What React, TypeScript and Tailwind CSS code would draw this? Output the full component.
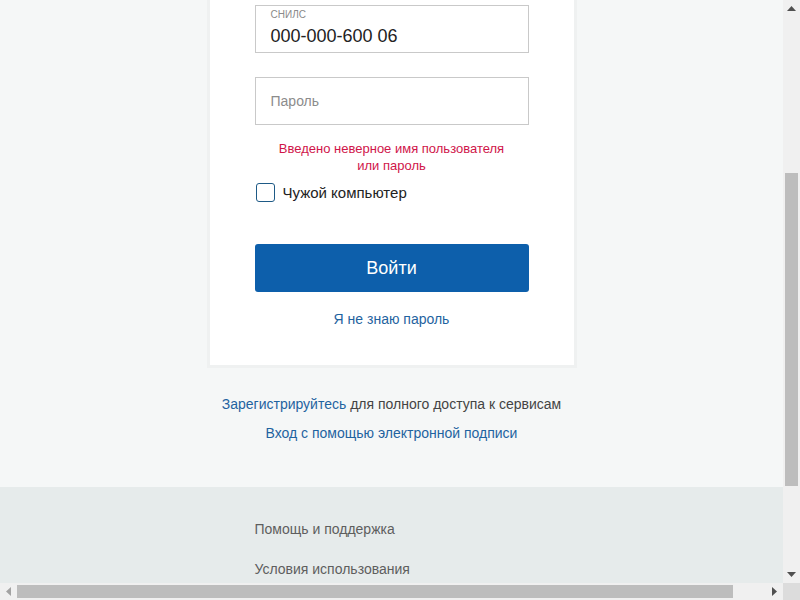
export default function App() {
  const font = { fontFamily: '"Liberation Sans", Arial, sans-serif' };
  return (
    <div className="w-[800px] h-[600px] overflow-hidden flex flex-col bg-[#f0f0f0]" style={font}>
      <div className="flex h-[583px]">
        {/* page viewport */}
        <div className="w-[783px] h-[583px] overflow-hidden flex flex-col bg-[#f5f7f7]">
          <div className="w-[370px] mx-auto bg-white border-x-[3px] border-b-[3px] border-[#eff1f1] px-[45px] pt-[5px] pb-[36px]">
            <div className="h-[48px] border border-[#c9c9c9] px-[15px] flex flex-col">
              <span className="text-[10px] leading-[10px] text-[#8a8a8a] mt-[4px]">СНИЛС</span>
              <span className="text-[18px] leading-[20px] text-[#222] mt-[6px]">000-000-600 06</span>
            </div>
            <div className="h-[48px] mt-[24px] border border-[#c9c9c9] px-[15px] flex items-center">
              <span className="text-[14px] text-[#8c8c8c]">Пароль</span>
            </div>
            <p className="mt-[15px] text-center text-[13px] leading-[17px] text-[#d0154a]">
              Введено неверное имя пользователя
              <br />
              или пароль
            </p>
            <label className="mt-[9px] flex items-center gap-[8px]">
              <span className="w-[19px] h-[19px] rounded-[3px] border-[1.5px] border-[#1e5a86] ml-[1px]" />
              <span className="text-[15px] leading-[19px] text-[#222]">Чужой компьютер</span>
            </label>
            <button className="mt-[42px] w-full h-[48px] rounded-[3px] bg-[#0d5fab] text-white text-[18px] flex items-center justify-center">
              Войти
            </button>
            <div className="mt-[17px] text-center text-[14px] leading-[20px] text-[#1f63a0]">Я не знаю пароль</div>
          </div>
          <div className="mt-[26px] text-center text-[14px] leading-[20px] text-[#444]">
            <span className="text-[#1f63a0]">Зарегистрируйтесь</span> для полного доступа к сервисам
          </div>
          <div className="mt-[9px] text-center text-[14px] leading-[20px] text-[#1f63a0]">
            Вход с помощью электронной подписи
          </div>
          <div className="mt-[44px] flex-1 bg-[#e6ebeb]">
            <div className="w-[274px] mx-auto pt-[32px] flex flex-col gap-[20px] text-[14px] leading-[20px] text-[#5e5e5e]">
              <span>Помощь и поддержка</span>
              <span>Условия использования</span>
            </div>
          </div>
        </div>
        {/* vertical scrollbar */}
        <div className="w-[17px] h-[583px] bg-[#f0f0f0] flex flex-col items-center">
          <div className="h-[17px] flex items-center justify-center">
            <svg width="9" height="5" viewBox="0 0 9 5"><path d="M0 5 L4.5 0 L9 5 Z" fill="#505050" /></svg>
          </div>
          <div className="h-[156px]" />
          <div className="w-[13px] h-[313px] bg-[#bdbdbd]" />
          <div className="flex-1" />
          <div className="h-[17px] flex items-center justify-center">
            <svg width="9" height="5" viewBox="0 0 9 5"><path d="M0 0 L4.5 5 L9 0 Z" fill="#505050" /></svg>
          </div>
        </div>
      </div>
      {/* horizontal scrollbar */}
      <div className="flex h-[17px]">
        <div className="w-[783px] flex items-center bg-[#f0f0f0]">
          <div className="w-[17px] flex items-center justify-center">
            <svg width="5" height="9" viewBox="0 0 5 9"><path d="M5 0 L0 4.5 L5 9 Z" fill="#a3a3a3" /></svg>
          </div>
          <div className="w-[716px] h-[13px] bg-[#bdbdbd]" />
          <div className="flex-1" />
          <div className="w-[17px] flex items-center justify-center">
            <svg width="5" height="9" viewBox="0 0 5 9"><path d="M0 0 L5 4.5 L0 9 Z" fill="#505050" /></svg>
          </div>
        </div>
        <div className="w-[17px] bg-[#dcdcdc]" />
      </div>
    </div>
  );
}
